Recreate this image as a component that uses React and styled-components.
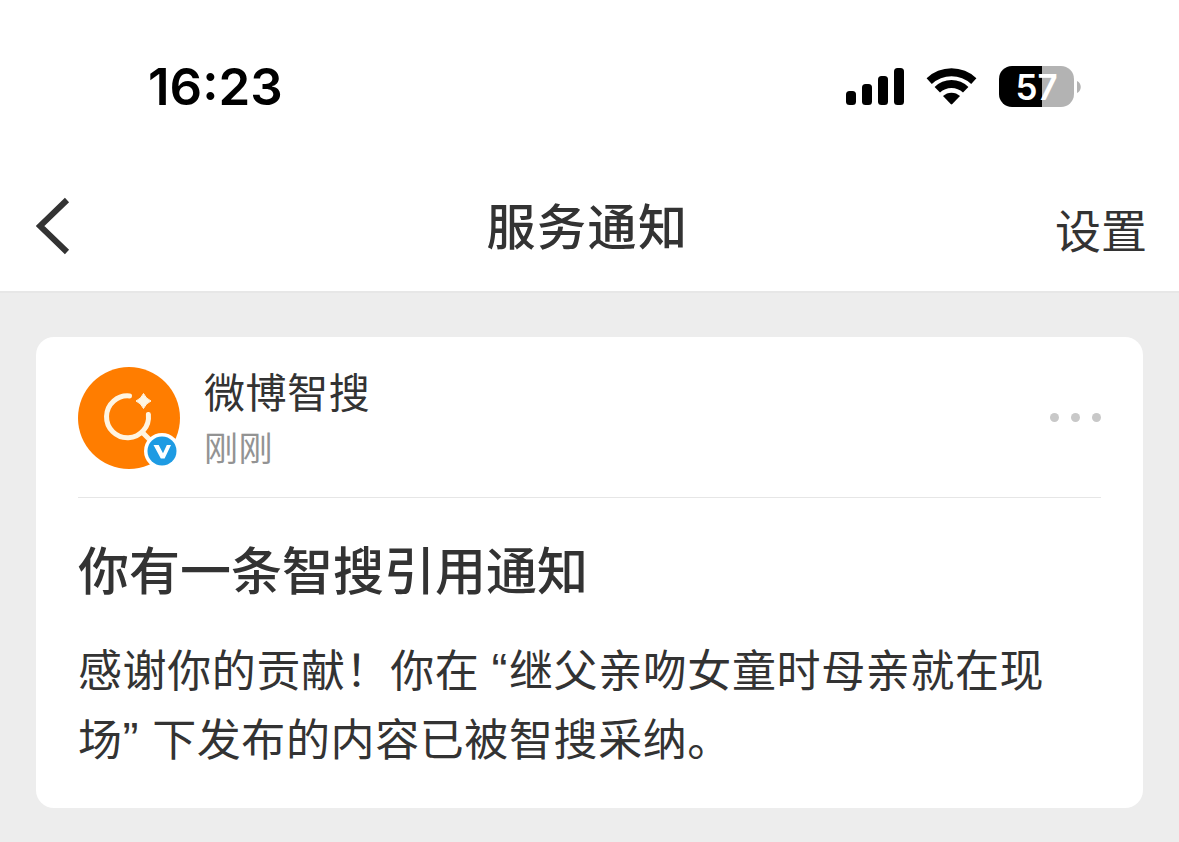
import React from "react";
import styled, { createGlobalStyle } from "styled-components";

const GlobalStyle = createGlobalStyle`
  body {
    margin: 0;
    background: #ededed;
    color: #333;
    font-family: "Noto Sans CJK SC", sans-serif;
  }
`;

const Page = styled.div`
  display: flex;
  flex-direction: column;
  height: 842px;
  overflow: hidden;
`;

const Top = styled.div`
  height: 291px;
  box-sizing: content-box;
  background: #fff;
  border-bottom: 2px solid #e7e7e7;
`;

const StatusBar = styled.div`
  display: flex;
  align-items: center;
  justify-content: space-between;
  height: 173px;
  padding: 0 98px 0 148px;
  color: #000;
`;

const Clock = styled.span`
  padding-top: 1px;
  font-family: Inter, sans-serif;
  font-size: 51px;
  font-weight: 600;
  line-height: 60px;
`;

const StatusIcons = styled.div`
  display: flex;
  align-items: center;
`;

const Signal = styled.svg`
  display: block;
  margin-right: 22px;
`;

const Wifi = styled.svg`
  display: block;
  margin-right: 22px;
`;

const Battery = styled.div`
  width: 75px;
  height: 41px;
  border-radius: 13px;
  background: linear-gradient(to right, #000 43px, #b3b3b3 43px);
  color: #fff;
  font-family: Inter, sans-serif;
  font-size: 35px;
  font-weight: 600;
  line-height: 42px;
  text-align: center;
`;

const BatteryCap = styled.svg`
  display: block;
  margin-left: 3px;
`;

const NavBar = styled.header`
  display: grid;
  grid-template-columns: 200px 1fr 200px;
  align-items: center;
  height: 106px;
  padding: 0 32px 0 36px;
`;

const BackButton = styled.button`
  justify-self: start;
  padding: 0;
  border: 0;
  background: none;

  svg {
    display: block;
  }
`;

const Title = styled.h1`
  margin: 0;
  padding: 0 8px 5px 0;
  font-size: 49px;
  font-weight: 500;
  line-height: 60px;
  letter-spacing: 1.5px;
  text-align: center;
`;

const Settings = styled.a`
  justify-self: end;
  padding-top: 4px;
  font-size: 46px;
  line-height: 60px;
`;

const Card = styled.section`
  height: 471px;
  margin: 44px 36px 0;
  padding: 0 42px;
  box-sizing: border-box;
  border-radius: 18px;
  background: #fff;
`;

const CardHeader = styled.div`
  display: flex;
  align-items: center;
  height: 161px;
  padding-top: 1px;
  box-sizing: border-box;
  border-bottom: 1px solid #e6e6e6;
`;

const Avatar = styled.svg`
  display: block;
  flex: none;
  margin-right: 24px;
`;

const Sender = styled.div`
  flex: 1;
  padding-top: 2px;
`;

const Name = styled.div`
  font-size: 41px;
  line-height: 56px;
  letter-spacing: 0.6px;
`;

const Time = styled.div`
  color: #939393;
  font-size: 34px;
  line-height: 57px;
  letter-spacing: 0.5px;
`;

const More = styled.div`
  display: flex;
  gap: 12px;
`;

const Dot = styled.span`
  width: 9px;
  height: 9px;
  border-radius: 50%;
  background: #c8c8c8;
`;

const Heading = styled.h2`
  margin: 35px 0 0;
  font-size: 51px;
  font-weight: 500;
  line-height: 70px;
`;

const Message = styled.p`
  margin: 33px 0 0;
  font-family: "Noto Sans", "Noto Sans CJK SC", sans-serif;
  font-size: 44px;
  line-height: 69px;
  letter-spacing: 0.6px;
  white-space: nowrap;
`;

const Quote = styled.span`
  font-family: "Liberation Sans", sans-serif;
  font-size: 48px;
  line-height: 1;
  letter-spacing: 1.5px;
`;

const App = () => {
  return (
    <Page>
      <GlobalStyle />
      <Top>
        <StatusBar>
          <Clock>16:23</Clock>
          <StatusIcons>
            <Signal width="58" height="37" viewBox="0 0 58 37">
              <rect x="0" y="23" width="10" height="14" rx="3.5" />
              <rect x="16" y="16" width="10" height="21" rx="3.5" />
              <rect x="32" y="8" width="10" height="29" rx="3.5" />
              <rect x="48" y="0" width="10" height="37" rx="3.5" />
            </Signal>
            <Wifi width="51" height="37" viewBox="0 0 51 37">
              <path d="M0.6 10.2 A36 36 0 0 1 50.4 10.2 L45.2 16 A29 29 0 0 0 5.8 16 Z" />
              <path d="M8.6 19 A24 24 0 0 1 42.4 19 L37 24.6 A16.8 16.8 0 0 0 14 24.6 Z" />
              <path d="M17 28 A12.5 12.5 0 0 1 34 28 L26.3 36 Q25.5 36.8 24.7 36 Z" />
            </Wifi>
            <Battery>57</Battery>
            <BatteryCap width="4" height="14" viewBox="0 0 4 14">
              <path d="M0 1 C5 3 5 11 0 13 Z" fill="#b3b3b3" />
            </BatteryCap>
          </StatusIcons>
        </StatusBar>
        <NavBar>
          <BackButton aria-label="返回">
            <svg width="34" height="58" viewBox="0 0 34 58">
              <path d="M31 3 L4 29 L31 55" fill="none" stroke="#333" strokeWidth="6" />
            </svg>
          </BackButton>
          <Title>服务通知</Title>
          <Settings>设置</Settings>
        </NavBar>
      </Top>
      <Card>
        <CardHeader>
          <Avatar width="102" height="102" viewBox="0 0 102 102">
            <circle cx="51" cy="51" r="51" fill="#ff7d00" />
            <path
              d="M51.5 28.9 A21 21 0 1 0 70.4 47.5 M64.5 65.5 L74 75"
              fill="none"
              stroke="#fff5e2"
              strokeWidth="5"
              strokeLinecap="round"
            />
            <path
              d="M65.5 26.5 Q67.8 31.7 73 34 Q67.8 36.3 65.5 41.5 Q63.2 36.3 58 34 Q63.2 31.7 65.5 26.5 Z"
              fill="#fff5e2"
              stroke="#fff5e2"
              strokeLinejoin="round"
            />
            <circle cx="84" cy="84" r="18" fill="#fff" />
            <circle cx="84" cy="84" r="14.5" fill="#1e9be3" />
            <path d="M75.5 78 H80.7 L85 86.2 L88.8 78 H93 L86.6 91.5 H82.8 Z" fill="#fff" />
          </Avatar>
          <Sender>
            <Name>微博智搜</Name>
            <Time>刚刚</Time>
          </Sender>
          <More>
            <Dot />
            <Dot />
            <Dot />
          </More>
        </CardHeader>
        <Heading>你有一条智搜引用通知</Heading>
        <Message>
          感谢你的贡献！你在 <Quote>“</Quote>继父亲吻女童时母亲就在现
          <br />
          场<Quote>”</Quote> 下发布的内容已被智搜采纳。
        </Message>
      </Card>
    </Page>
  );
};

export default App;
